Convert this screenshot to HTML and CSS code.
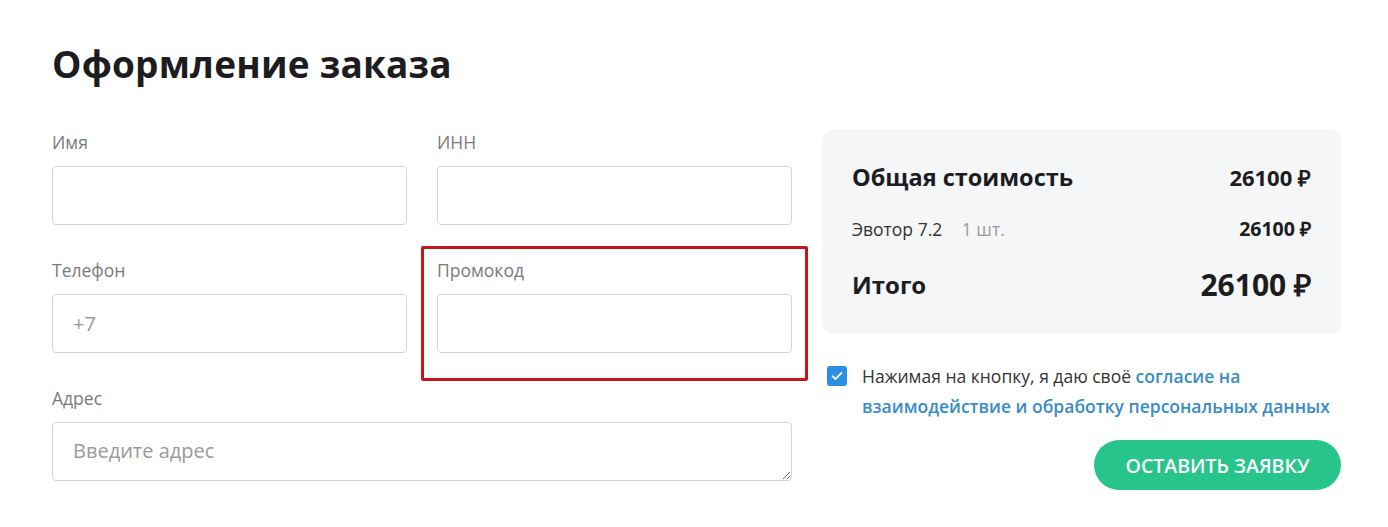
FILE: index.html
```html
<!DOCTYPE html>
<html lang="ru">
<head>
  <meta charset="UTF-8">
  <meta name="viewport" content="width=device-width, initial-scale=1.0">
  <title>Оформление заказа</title>
  <link rel="stylesheet" href="styles.css">
</head>
<body>
  <div class="page">
    <h1>Оформление заказа</h1>
    <div class="order">
      <form class="fields">
        <div class="field">
          <label for="name">Имя</label>
          <input type="text" id="name">
        </div>
        <div class="field">
          <label for="inn">ИНН</label>
          <input type="text" id="inn">
        </div>
        <div class="field">
          <label for="phone">Телефон</label>
          <input type="text" id="phone" placeholder="+7">
        </div>
        <div class="field promo">
          <label for="promo">Промокод</label>
          <input type="text" id="promo">
          <div class="mark"></div>
        </div>
        <div class="field wide">
          <label for="address">Адрес</label>
          <textarea id="address" placeholder="Введите адрес"></textarea>
        </div>
      </form>
      <div class="side">
        <div class="summary">
          <div class="row total-head">
            <span>Общая стоимость</span>
            <span class="price">26100 ₽</span>
          </div>
          <div class="row item">
            <span>Эвотор 7.2 <span class="qty">1 шт.</span></span>
            <span class="price">26100 ₽</span>
          </div>
          <div class="row total">
            <span>Итого</span>
            <span class="price">26100 ₽</span>
          </div>
        </div>
        <div class="agree">
          <span class="check">
            <svg width="12" height="10" viewBox="0 0 12 10"><path d="M1.5 5.2 4.5 8 10.5 1.8" fill="none" stroke="#fff" stroke-width="1.8" stroke-linecap="round" stroke-linejoin="round"/></svg>
          </span>
          <p>Нажимая на кнопку, я даю своё <a href="#">согласие на взаимодействие и обработку персональных данных</a></p>
        </div>
        <button type="button" class="submit">Оставить заявку</button>
      </div>
    </div>
  </div>
</body>
</html>
```

FILE: styles.css
```css
body {
  margin: 0;
  font-family: "Open Sans", Arial, sans-serif;
  background-color: #fff;
  color: #222;
}
.page {
  padding: 38px 0 0 52px;
  width: 1289px;
}
h1 {
  margin: 0 0 39px;
  font-size: 37px;
  line-height: 52px;
  font-weight: 700;
  color: #1d1d1f;
  letter-spacing: 0.2px;
}
.order {
  display: flex;
  gap: 30px;
  align-items: flex-start;
}
.fields {
  width: 740px;
  display: grid;
  grid-template-columns: 1fr 1fr;
  column-gap: 30px;
  row-gap: 32px;
}
.field {
  display: flex;
  flex-direction: column;
  position: relative;
}
.field.wide {
  grid-column: 1 / 3;
}
label {
  font-size: 17.5px;
  line-height: 26px;
  color: #7a7a7a;
  margin-bottom: 11px;
}
input, textarea {
  box-sizing: border-box;
  height: 59px;
  border: 1px solid #d6d6d6;
  border-radius: 4px;
  padding: 0 20px;
  font-family: inherit;
  font-size: 20px;
  color: #222;
  background: #fff;
}
textarea {
  padding-top: 14px;
  resize: vertical;
  line-height: 28px;
}
input::placeholder, textarea::placeholder {
  color: #9a9a9a;
}
.mark {
  position: absolute;
  left: -16px;
  right: -16px;
  top: -11px;
  bottom: -28px;
  border: 3px solid #c4161c;
  border-radius: 2px;
  pointer-events: none;
}
.side {
  width: 519px;
  display: flex;
  flex-direction: column;
}
.summary {
  background-color: #f4f6f7;
  border-radius: 12px;
  padding: 30px 30px 29px;
}
.row {
  display: flex;
  justify-content: space-between;
  align-items: center;
}
.total-head {
  font-size: 23.5px;
  font-weight: 700;
  line-height: 36px;
  color: #1d1d1f;
}
.total-head .price {
  font-size: 22px;
}
.item {
  margin-top: 21px;
  font-size: 17.5px;
  line-height: 26px;
  color: #333;
}
.item .qty {
  color: #9a9a9a;
  margin-left: 15px;
}
.item .price {
  font-weight: 700;
  font-size: 19.5px;
  color: #1d1d1f;
}
.total {
  margin-top: 23px;
  font-size: 24px;
  font-weight: 700;
  line-height: 40px;
  color: #1d1d1f;
}
.total .price {
  font-size: 30px;
}
.agree {
  display: flex;
  gap: 15px;
  margin-top: 27px;
  padding-left: 5px;
}
.check {
  flex: none;
  width: 20px;
  height: 20px;
  margin-top: 5px;
  border-radius: 3px;
  background-color: #2e8ee6;
  display: flex;
  align-items: center;
  justify-content: center;
}
.agree p {
  margin: 0;
  font-size: 17.5px;
  line-height: 30px;
  color: #333;
}
.agree a {
  color: #3a8cc4;
  font-weight: 600;
  text-decoration: none;
}
.submit {
  align-self: flex-end;
  margin-top: 19px;
  width: 247px;
  height: 50px;
  border: none;
  border-radius: 25px;
  background-color: #27c48c;
  color: #fff;
  font-family: inherit;
  font-size: 19.5px;
  font-weight: 600;
  text-transform: uppercase;
  cursor: pointer;
}
```
